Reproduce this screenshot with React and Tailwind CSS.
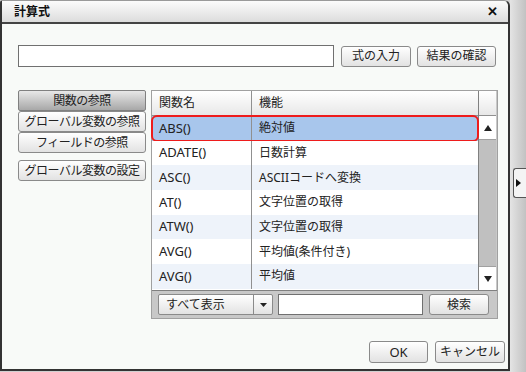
import React from 'react'

const rows = [
  ['ABS()', '絶対値'],
  ['ADATE()', '日数計算'],
  ['ASC()', 'ASCIIコードへ変換'],
  ['AT()', '文字位置の取得'],
  ['ATW()', '文字位置の取得'],
  ['AVG()', '平均値(条件付き)'],
  ['AVG()', '平均値'],
]

const btn =
  'h-[21px] border border-[#8a8a8a] rounded-[3px] bg-gradient-to-b from-white to-[#e2e2e2] text-[12px] text-[#222] flex items-center justify-center leading-none'

export default function App() {
  return (
    <div
      className="w-[526px] h-[372px] flex bg-[#d0d0d0] overflow-hidden"
      style={{ fontFamily: '"Noto Sans", "Noto Sans CJK JP", sans-serif' }}
    >
      {/* Dialog */}
      <div className="w-[510px] h-[371px] border-2 border-[#333] border-t-[#9a9a9a] border-t rounded-tr-[6px] rounded-tl-[3px] bg-[#f8faf8] flex flex-col shrink-0">
        {/* Title bar */}
        <div className="h-[23px] border-b-2 border-[#444] bg-gradient-to-b from-[#fcfcfc] to-[#dcdcdc] flex items-center justify-between pl-[12px] pr-[10px] rounded-tr-[6px]">
          <span className="text-[12px] font-bold text-[#111]">計算式</span>
          <span className="text-[13px] font-bold text-[#111] leading-none">✕</span>
        </div>

        {/* Formula input */}
        <div className="flex items-center mt-[21px] pl-[16px] gap-[6px]">
          <div className="w-[316px] h-[22px] border border-[#707070] bg-white" />
          <button className={`${btn} w-[70px] ml-px`}>式の入力</button>
          <button className={`${btn} w-[79px]`}>結果の確認</button>
        </div>

        {/* Middle */}
        <div className="flex mt-[23px] pl-[16px]">
          <div className="flex flex-col w-[128px] tracking-[-0.5px]">
            <button className="h-[21px] border border-[#808080] rounded-[2px] bg-gradient-to-b from-[#e8e8e8] to-[#a8a8a8] text-[12px] text-[#222] flex items-center justify-center leading-none">
              関数の参照
            </button>
            <button className={`${btn} rounded-[2px] h-[20px]`}>グローバル変数の参照</button>
            <button className={`${btn} rounded-[2px] h-[20px]`}>フィールドの参照</button>
            <button className={`${btn} rounded-[2px] mt-[7px]`}>グローバル変数の設定</button>
          </div>

          {/* Table panel */}
          <div className="ml-[5px] w-[347px] h-[229px] bg-[#c8c8c8] border border-[#a0a0a0] flex flex-col">
            <div className="flex h-[199px]">
              <div className="w-[327px] bg-white border-r border-[#808080] flex flex-col">
                <div className="flex h-[25px] border-b border-[#909090] bg-gradient-to-b from-white to-[#e8e8e8] text-[12px] text-[#222]">
                  <div className="w-[100px] border-r border-[#909090] flex items-center pl-[7px]">関数名</div>
                  <div className="flex-1 flex items-center pl-[7px]">機能</div>
                </div>
                {rows.map(([name, desc], i) => (
                  <div
                    key={i}
                    className={
                      'relative flex h-[24.7px] text-[12px] text-[#222] ' +
                      (i === 0 ? 'bg-[#a8c6ec]' : i % 2 === 0 ? 'bg-[#eef3fa]' : 'bg-white')
                    }
                  >
                    <div className="w-[100px] border-r border-[#909090] flex items-center pl-[7px] text-[13px]">{name}</div>
                    <div className="flex-1 flex items-center pl-[7px]">{desc}</div>
                    {i === 0 && (
                      <div className="absolute inset-x-[-1px] top-[-1px] bottom-[-1px] border-2 border-[#ee1c1c] rounded-[6px]" />
                    )}
                  </div>
                ))}
              </div>
              {/* Scrollbar */}
              <div className="w-[17px] flex flex-col bg-[#c4c4c4]">
                <div className="h-[25px] border-b border-[#909090] bg-gradient-to-b from-white to-[#e8e8e8]" />
                <div className="h-[24px] bg-white border-b border-[#a0a0a0] flex items-center justify-center">
                  <svg width="8" height="6" viewBox="0 0 8 6"><path d="M4 0L8 6H0z" fill="#222" /></svg>
                </div>
                <div className="flex-1 bg-[#c0c0c0]" />
                <div className="h-[24px] bg-white border-t border-[#a0a0a0] flex items-center justify-center">
                  <svg width="8" height="6" viewBox="0 0 8 6"><path d="M0 0H8L4 6z" fill="#222" /></svg>
                </div>
              </div>
            </div>
            <div className="flex items-center h-[28px] pl-[6px] border-t border-[#808080]">
              <div className="w-[115px] h-[21px] border border-[#8a8a8a] rounded-[2px] bg-gradient-to-b from-white to-[#e2e2e2] flex text-[12px] text-[#222]">
                <div className="flex-1 flex items-center pl-[7px] border-r border-[#8a8a8a]">すべて表示</div>
                <div className="w-[18px] flex items-center justify-center">
                  <svg width="7" height="4" viewBox="0 0 7 4"><path d="M0 0H7L3.5 4z" fill="#222" /></svg>
                </div>
              </div>
              <div className="ml-[5px] w-[145px] h-[21px] border border-[#707070] bg-white" />
              <button className={`${btn} ml-[6px] w-[60px] rounded-[2px]`}>検索</button>
            </div>
          </div>
        </div>

        {/* Footer */}
        <div className="flex justify-end gap-[7px] mt-[22px] pr-[3px]">
          <button className={`${btn} w-[59px] h-[22px] text-[13px]`}>OK</button>
          <button className={`${btn} w-[70px] h-[22px]`}>キャンセル</button>
        </div>
      </div>

      {/* Right strip */}
      <div className="flex-1 bg-gradient-to-r from-[#e4e4e4] to-[#c2c2c2] flex flex-col">
        <div className="mt-[168px] ml-[3px] w-[13px] h-[30px] border border-[#555] border-r-0 rounded-l-[3px] bg-[#f4f4f4] flex items-center pl-[2px]">
          <svg width="5" height="8" viewBox="0 0 5 8"><path d="M0 0L5 4L0 8z" fill="#111" /></svg>
        </div>
      </div>
    </div>
  )
}
